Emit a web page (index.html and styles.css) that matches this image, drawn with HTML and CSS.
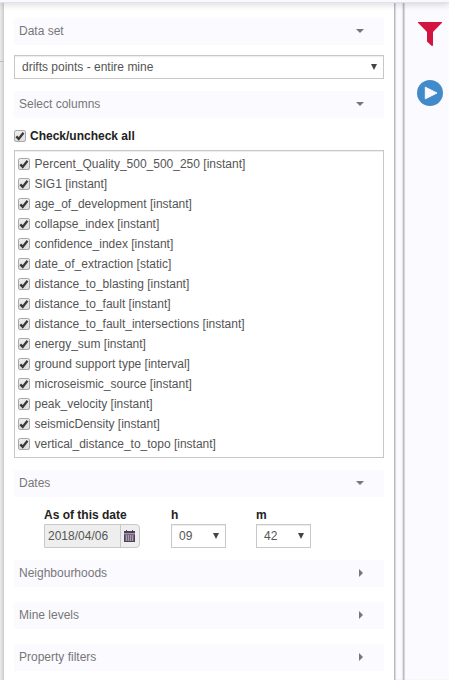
FILE: index.html
```html
<!DOCTYPE html>
<html lang="en">
<head>
<meta charset="utf-8">
<title>Filters</title>
<link rel="stylesheet" href="styles.css">
</head>
<body>
<svg class="defs" width="0" height="0">
  <symbol id="tick" viewBox="0 0 10 10"><path d="M1.3 5.4 3.7 7.9 8.5 1.8" fill="none" stroke="#3b3b3b" stroke-width="2.4"/></symbol>
</svg>
<div class="topbar"></div>
<div class="workspace">
  <div class="edge"><div class="edge-line"></div></div>
  <main class="panel">
    <h2 class="section">Data set<i class="caret down"></i></h2>
    <div class="select dataset"><span>drifts points - entire mine</span><i class="arrow"></i></div>
    <h2 class="section">Select columns<i class="caret down"></i></h2>
    <div class="check all"><svg class="box"><use href="#tick"/></svg><b>Check/uncheck all</b></div>
    <div class="columns">
      <div class="check"><svg class="box"><use href="#tick"/></svg><span>Percent_Quality_500_500_250 [instant]</span></div>
      <div class="check"><svg class="box"><use href="#tick"/></svg><span>SIG1 [instant]</span></div>
      <div class="check"><svg class="box"><use href="#tick"/></svg><span>age_of_development [instant]</span></div>
      <div class="check"><svg class="box"><use href="#tick"/></svg><span>collapse_index [instant]</span></div>
      <div class="check"><svg class="box"><use href="#tick"/></svg><span>confidence_index [instant]</span></div>
      <div class="check"><svg class="box"><use href="#tick"/></svg><span>date_of_extraction [static]</span></div>
      <div class="check"><svg class="box"><use href="#tick"/></svg><span>distance_to_blasting [instant]</span></div>
      <div class="check"><svg class="box"><use href="#tick"/></svg><span>distance_to_fault [instant]</span></div>
      <div class="check"><svg class="box"><use href="#tick"/></svg><span>distance_to_fault_intersections [instant]</span></div>
      <div class="check"><svg class="box"><use href="#tick"/></svg><span>energy_sum [instant]</span></div>
      <div class="check"><svg class="box"><use href="#tick"/></svg><span>ground support type [interval]</span></div>
      <div class="check"><svg class="box"><use href="#tick"/></svg><span>microseismic_source [instant]</span></div>
      <div class="check"><svg class="box"><use href="#tick"/></svg><span>peak_velocity [instant]</span></div>
      <div class="check"><svg class="box"><use href="#tick"/></svg><span>seismicDensity [instant]</span></div>
      <div class="check"><svg class="box"><use href="#tick"/></svg><span>vertical_distance_to_topo [instant]</span></div>
    </div>
    <h2 class="section">Dates<i class="caret down"></i></h2>
    <div class="dates">
      <div class="field"><b>As of this date</b>
        <div class="date"><span>2018/04/06</span><div class="picker">
          <svg width="11" height="12" viewBox="0 0 11 12"><path d="M0 1h11v2.5H0zM2 0h1v1H2zM8 0h1v1H8zM0 4.2h11V12H0z" fill="#51405a"/><path d="M1 6h9M1 8h9M1 10h9M2.5 5v6M4.5 5v6M6.5 5v6M8.5 5v6" stroke="#d9d2dd" stroke-width=".5"/></svg>
        </div></div>
      </div>
      <div class="field"><b>h</b><div class="select"><span>09</span><i class="arrow"></i></div></div>
      <div class="field"><b>m</b><div class="select"><span>42</span><i class="arrow"></i></div></div>
    </div>
    <h2 class="section">Neighbourhoods<i class="caret right"></i></h2>
    <h2 class="section">Mine levels<i class="caret right"></i></h2>
    <h2 class="section">Property filters<i class="caret right"></i></h2>
  </main>
  <div class="splitter"></div>
  <aside class="tools">
    <svg width="24" height="24" viewBox="0 0 24 24"><path d="M0 0h24v.8L15 10v13.8h-1.5L9 19.5V10L0 .8z" fill="#d2143f"/></svg>
    <svg class="play" width="26" height="26" viewBox="0 0 26 26"><circle cx="13" cy="13" r="13" fill="#428bca"/><path d="M8.3 7.2v11.6L20 13z" fill="#fafaff" stroke="#fafaff" stroke-linejoin="round"/></svg>
  </aside>
</div>
</body>
</html>
```
FILE: styles.css
```css
* { box-sizing: border-box; }
body {
  margin: 0;
  height: 680px;
  overflow: hidden;
  background: #fff;
  color: #555;
  font: 12px/20px "Liberation Sans", Arial, sans-serif;
}
.defs { position: absolute; }
.topbar {
  position: relative;
  height: 3px;
  background: #f8f8ff;
  border-bottom: 1px solid #e2e2e6;
  box-shadow: 0 1px 6px rgba(0, 0, 0, .25);
}
.workspace { display: flex; height: 677px; }
.edge {
  width: 4px;
  padding-top: 58px;
  background: linear-gradient(90deg, #ececec, #cdcdcd);
}
.edge-line { height: 1px; background: #bdbdbd; }
.panel { width: 390px; padding: 15px 10px 0; }
.section {
  display: flex;
  align-items: center;
  justify-content: space-between;
  height: 27px;
  margin: 0 0 15px;
  padding: 0 21px 2px 5px;
  background: #fafaff;
  color: #777;
  font-size: 12px;
  font-weight: 400;
}
.caret { border: 0 solid transparent; }
.caret.down { border-width: 4px 4px 0; border-top-color: #777; margin-right: -1px; }
.caret.right { border-width: 4px 0 4px 4px; border-left-color: #777; }
.select {
  display: flex;
  align-items: center;
  justify-content: space-between;
  height: 24px;
  padding: 0 6px 0 7px;
  border: 1px solid #c8c8c8;
  background: #fff;
  box-shadow: inset 0 1px 1px rgba(0, 0, 0, .075);
}
.arrow { border: 3px solid transparent; border-top: 6px solid #444; border-bottom: 0; }
.dataset { margin: -5px 0 12px; }
.check { display: flex; align-items: center; height: 20px; }
.check b, .field b { color: #222; }
.box {
  width: 12px;
  height: 12px;
  margin-right: 4.5px;
  flex: none;
  border: 1px solid #a9a9a9;
  border-radius: 2px;
  background: linear-gradient(#eee, #dedede);
}
.all { margin: -7px 0 4px; }
.all .box { margin-right: 4px; }
.columns {
  height: 308px;
  margin-bottom: 12px;
  padding: 3px 3px 0;
  border: 1px solid #c8c8c8;
  box-shadow: inset 0 1px 1px rgba(0, 0, 0, .075);
}
.dates {
  display: grid;
  grid-template-columns: 127px 85px 55px;
  margin: -5px 0 12px;
  padding-left: 30px;
}
.field b { display: block; height: 17px; line-height: 16px; }
.field .select { width: 55px; }
.date {
  display: flex;
  width: 96px;
  height: 24px;
  border: 1px solid #c8c8c8;
  border-radius: 0 4px 4px 0;
  background: #eee;
}
.date span { width: 75px; padding-left: 3px; line-height: 22px; }
.picker {
  flex: 1;
  display: flex;
  align-items: center;
  justify-content: center;
  padding-right: 1px;
  border-left: 1px solid #c8c8c8;
}
.splitter {
  width: 10px;
  border: 1px solid #bbb;
  border-width: 0 1px;
  background: #fafaff;
  box-shadow: inset 1px 0 1px #d5d5dc, inset -1px 0 1px #e2e2ea;
}
.tools {
  flex: 1;
  display: flex;
  flex-direction: column;
  align-items: center;
  padding: 19px 0 0 6px;
  background: #fafaff;
  box-shadow: inset 1px 0 1px #d5d5dc;
}
.play { margin-top: 34px; }
```
